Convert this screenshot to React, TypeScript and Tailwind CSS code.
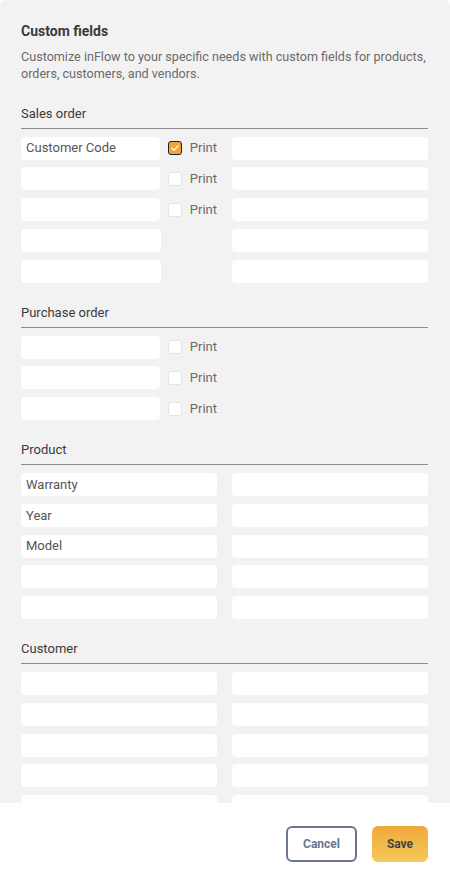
import React from "react"

type Row = { label?: string; print?: "on" | "off" | null; right?: boolean }

function Checkbox({ checked }: { checked: boolean }) {
  if (checked) {
    return (
      <span className="flex h-[14px] w-[14px] items-center justify-center rounded-[3px] border-[1.5px] border-[#1f1f1f] bg-[#f0a43a]">
        <svg viewBox="0 0 12 12" className="h-[10px] w-[10px]" fill="none">
          <path d="M2.2 6.3 4.8 8.8 9.8 3.2" stroke="#fff" strokeWidth="1.6" strokeLinecap="round" strokeLinejoin="round" />
        </svg>
      </span>
    )
  }
  return <span className="h-[14px] w-[14px] rounded-[3px] border border-[#e4e4e4] bg-white" />
}

function Field({ value, className = "" }: { value?: string; className?: string }) {
  return (
    <div className={`flex h-[23px] items-center rounded-[4px] bg-white px-[5px] text-[13px] text-[#555] ${className}`}>
      {value}
    </div>
  )
}

function Section({ title, first, children }: { title: string; first?: boolean; children: React.ReactNode }) {
  return (
    <div className={first ? "mt-[23px]" : "mt-[22px]"}>
      <div className="border-b border-[#8c8c8c] pb-[6px] text-[13px] leading-[16px] text-[#3a3a3a]">{title}</div>
      <div className="mt-[8px] flex flex-col gap-[7.75px]">{children}</div>
    </div>
  )
}

function OrderRow({ label, print, right }: Row) {
  return (
    <div className="grid grid-cols-2 gap-[15px]">
      <div className="flex items-center">
        <Field value={label} className="w-[140px]" />
        {print && (
          <div className="ml-[8px] flex items-center gap-[8px]">
            <Checkbox checked={print === "on"} />
            <span className="text-[13px] leading-[16px] text-[#6a6a6a]">Print</span>
          </div>
        )}
      </div>
      {right ? <Field /> : <div />}
    </div>
  )
}

function PairRow({ left }: { left?: string }) {
  return (
    <div className="grid grid-cols-2 gap-[15px]">
      <Field value={left} />
      <Field />
    </div>
  )
}

export default function App() {
  const sales: Row[] = [
    { label: "Customer Code", print: "on", right: true },
    { print: "off", right: true },
    { print: "off", right: true },
    { right: true },
    { right: true },
  ]
  const purchase: Row[] = [{ print: "off" }, { print: "off" }, { print: "off" }]

  return (
    <div className="flex h-[882px] w-[450px] flex-col bg-white font-['Roboto',sans-serif]">
      <div className="h-[803px] overflow-hidden rounded-t-[6px] bg-[#f2f2f2] pl-[21px] pr-[22px] pt-[23px]">
        <h1 className="text-[14px] font-bold leading-[17px] text-[#3a3a3a]">Custom fields</h1>
        <p className="mt-[8px] text-[12.6px] leading-[17.3px] text-[#6b6b6b]">
          Customize inFlow to your specific needs with custom fields for products, orders, customers, and vendors.
        </p>

        <Section title="Sales order" first>
          {sales.map((r, i) => (
            <OrderRow key={i} {...r} />
          ))}
        </Section>

        <Section title="Purchase order">
          {purchase.map((r, i) => (
            <OrderRow key={i} {...r} />
          ))}
        </Section>

        <Section title="Product">
          {["Warranty", "Year", "Model", "", ""].map((v, i) => (
            <PairRow key={i} left={v} />
          ))}
        </Section>

        <Section title="Customer">
          {[0, 1, 2, 3, 4, 5].map((i) => (
            <PairRow key={i} />
          ))}
        </Section>
      </div>

      <div className="flex flex-1 items-start justify-end gap-[15px] pr-[22px] pt-[23px]">
        <button className="h-[36px] w-[71px] rounded-[6px] border-2 border-[#6b7594] text-[12px] font-bold text-[#6b7594]">
          Cancel
        </button>
        <button className="h-[36px] w-[56px] rounded-[6px] bg-gradient-to-b from-[#efa83c] to-[#f6c95a] text-[12px] font-bold text-[#444]">
          Save
        </button>
      </div>
    </div>
  )
}
